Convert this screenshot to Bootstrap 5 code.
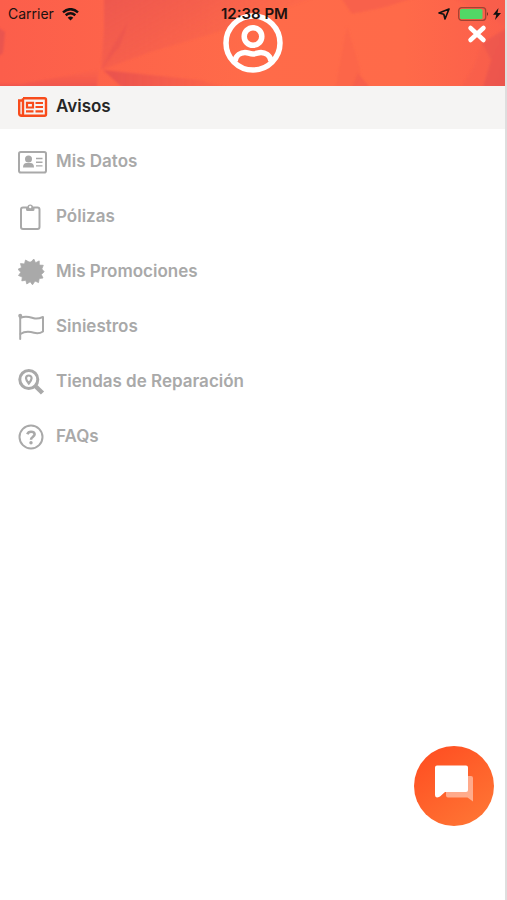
<!DOCTYPE html>
<html lang="es">
<head>
<meta charset="utf-8">
<meta name="viewport" content="width=device-width, initial-scale=1">
<title>Menú</title>
<link href="https://cdn.jsdelivr.net/npm/bootstrap@5.3.0/dist/css/bootstrap.min.css" rel="stylesheet">
<style>
body { font-family: Inter, "Liberation Sans", sans-serif; background: #fff; }
.app-shell { border-right: 2px solid #dedede; }
.app-header { background: #ff674a; height: 86px; color: #201210; }
.header-art { z-index: 0; }
.status-bar { z-index: 2; display: grid; grid-template-columns: 1fr auto 1fr; font-size: 14px; line-height: 28px; padding: 0 4px 0 8px; }
.status-time { font-size: 15px; font-weight: 600; }
.avatar-link { z-index: 1; top: 13px; left: 0; right: 0; width: 60px; margin: 0 auto; line-height: 0; }
.close-btn { z-index: 2; margin-right: 19px; line-height: 0; }
.menu-list { gap: 12px; }
.menu-link { height: 43px; padding: 0 18px; gap: 8px; color: #a9a9a9; font-size: 17px; line-height: 24px; font-weight: 600; text-decoration: none; }
.menu-link span { padding-bottom: 4px; }
.menu-link svg { width: 30px; height: 30px; flex: none; margin-bottom: 2px; }
.menu-link:hover { color: #777; }
.menu-link.current { background: #f5f4f3; color: #262626; }
.menu-link.current svg { color: #f84b1b; }
.chat-btn { width: 80px; height: 80px; right: 13px; bottom: 74px; background: linear-gradient(145deg, #ff4b20, #ff7936); }
</style>
</head>
<body>
<div class="app-shell min-vh-100">
  <header class="app-header position-relative overflow-hidden">
    <svg class="header-art position-absolute top-0 start-0 w-100 h-100" viewBox="0 0 505 86" preserveAspectRatio="none" aria-hidden="true">
      <defs>
        <linearGradient id="base" x1="0" y1="0" x2="1" y2="0"><stop offset="0" stop-color="#fc5e4b"/><stop offset=".5" stop-color="#ff6b49"/><stop offset=".8" stop-color="#ff6a49"/><stop offset="1" stop-color="#fb5f4b"/></linearGradient>
        <linearGradient id="shadeA" gradientUnits="userSpaceOnUse" x1="130" y1="-10" x2="185" y2="85"><stop offset="0" stop-color="#ef594e"/><stop offset="1" stop-color="#ef594e" stop-opacity="0"/></linearGradient>
        <linearGradient id="shadeB" x1="0" y1="0" x2="1" y2="0"><stop offset="0" stop-color="#e9524e"/><stop offset="1" stop-color="#f45b4c" stop-opacity=".2"/></linearGradient>
        <linearGradient id="shadeD" x1="0" y1="0" x2="0" y2="1"><stop offset="0" stop-color="#f45c4c" stop-opacity=".2"/><stop offset="1" stop-color="#ec534e"/></linearGradient>
        <linearGradient id="shadeE" x1="0" y1="0" x2="1" y2="1"><stop offset="0" stop-color="#f25b4d"/><stop offset="1" stop-color="#e9534f"/></linearGradient>
        <filter id="soft" x="-5%" y="-20%" width="110%" height="140%"><feGaussianBlur stdDeviation="1"/></filter>
      </defs>
      <path d="M0 0H505V86H0Z" fill="url(#base)"/>
      <g filter="url(#soft)">
        <path d="M-4 26L5 32L3 53L-4 58Z" fill="#e9544f"/>
        <path d="M104 -4H320L225 30L150 52L101 70L104 30Z" fill="url(#shadeA)"/>
        <path d="M101 69L113 46L128 22L120 46Z" fill="#e9544e" opacity=".6"/>
        <path d="M20 84L60 77L98 70L97 90H-4V84Z" fill="url(#shadeD)"/>
        <path d="M103 70L150 75L200 80L235 90H125Z" fill="url(#shadeB)"/>
        <path d="M340 -4H420L385 7L352 14Z" fill="#f35b4c" opacity=".6"/>
        <path d="M347 26L361 72L352 90H335Z" fill="#fa644a" opacity=".6"/>
        <path d="M358 73L372 90H351Z" fill="#f25a4b" opacity=".65"/>
        <path d="M450 -4H510V30L478 10Z" fill="#f65c4c" opacity=".55"/>
        <path d="M510 26L482 43L491 60L482 90H510Z" fill="url(#shadeE)"/>
        <path d="M482 43L491 60L482 90H460L475 65Z" fill="#f65d4c" opacity=".5"/>
      </g>
    </svg>
    <div class="status-bar position-relative">
      <div class="d-flex align-items-center gap-2">
        <span>Carrier</span>
        <svg width="17" height="13" viewBox="0 0 17 13" fill="none" stroke="#111" stroke-width="2.5" aria-hidden="true"><path d="M1 4.400Q8.500-2 16 4.400M3.700 7.300Q8.500 3.200 13.300 7.300"/><path d="M5.700 9.700Q8.500 7.300 11.300 9.700L8.500 12.600Z" fill="#111" stroke="none"/></svg>
      </div>
      <span class="status-time">12:38 PM</span>
      <div class="d-flex align-items-center justify-content-end">
        <svg width="12" height="12" viewBox="0 0 12 12" fill="none" stroke="#111" stroke-width="1.600" stroke-linejoin="round" aria-hidden="true"><path d="M11 1L1 5L5.800 6.200L7 11Z"/></svg>
        <svg class="ms-2" width="31" height="14" viewBox="0 0 31 14" aria-hidden="true"><rect x=".7" y=".7" width="27" height="12.600" rx="3" fill="none" stroke="#a14332" stroke-width="1.300"/><rect x="2" y="2" width="22.500" height="10" rx="1.500" fill="#52d866"/><path d="M29 5Q31 7 29 9Z" fill="#702c22"/></svg>
        <svg class="ms-1" width="8" height="12" viewBox="0 0 8 12" aria-hidden="true"><path d="M5.500 0L0 6.700H3.300L2 12L8 4.900H4.500Z" fill="#111"/></svg>
      </div>
    </div>
    <a href="#perfil" class="avatar-link position-absolute" aria-label="Perfil">
      <svg width="60" height="60" viewBox="0 0 60 60" fill="none" stroke="#fff" stroke-width="5.500" aria-hidden="true"><circle cx="30" cy="30" r="27"/><circle cx="30" cy="23.500" r="8.800"/><path d="M12 48C13 42 18 39.500 22 39.500C25 39.500 26.500 41 30 41C33.500 41 35 39.500 38 39.500C42 39.500 47 42 48 48"/></svg>
    </a>
    <div class="d-flex justify-content-end">
      <button type="button" class="close-btn btn p-0 border-0 position-relative" aria-label="Cerrar">
        <svg class="d-block" width="18" height="13" viewBox="0 0 18 13" overflow="visible" fill="none" stroke="#fff" stroke-width="4.500" stroke-linecap="round" aria-hidden="true"><path d="M2.500 0L15.500 12M15.500 0L2.500 12"/></svg>
      </button>
    </div>
  </header>
  <nav aria-label="Principal">
    <ul class="menu-list list-unstyled d-flex flex-column m-0">
      <li><a class="menu-link current d-flex align-items-center" href="#avisos" aria-current="page">
        <svg viewBox="0 0 30 30" fill="none" stroke="currentColor" stroke-width="2.400" aria-hidden="true"><path d="M5 6.200H26.500Q28 6.200 28 7.700V22.300Q28 23.800 26.500 23.800H3.500Q1.200 23.800 1.200 21.500V8.500H5M5 6.200V21.500Q5 23.600 3.200 23.800"/><path d="M9 10.800H15V15.500H9ZM17.500 11H25M17.500 15H25M8 19.300H15.500M17.500 19.300H25" stroke-width="2.200"/></svg>
        <span>Avisos</span></a></li>
      <li><a class="menu-link d-flex align-items-center" href="#datos">
        <svg viewBox="0 0 30 30" fill="currentColor" aria-hidden="true"><rect x="1" y="5" width="27" height="20.500" rx="1.800" fill="none" stroke="currentColor" stroke-width="2"/><circle cx="10.500" cy="12" r="3.500"/><path d="M5 20.500Q5 16 8.500 16H12.500Q16 16 16 20.500Z"/><path d="M18 11.500H24.500M18 15.200H24.500M18 18.900H24.500" stroke="currentColor" stroke-width="1.400"/></svg>
        <span>Mis Datos</span></a></li>
      <li><a class="menu-link d-flex align-items-center" href="#polizas">
        <svg viewBox="0 0 30 30" fill="none" stroke="currentColor" stroke-width="2" aria-hidden="true"><rect x="3" y="5.500" width="18.500" height="21.500" rx="2"/><path d="M8 5H9.500Q9.500 2.500 12.200 2.500T15 5H16.500V7.500Q16.500 9 15 9H9.500Q8 9 8 7.500Z" fill="currentColor" stroke="none"/><circle cx="12.200" cy="5" r="1.200" fill="#fff" stroke="none"/></svg>
        <span>Pólizas</span></a></li>
      <li><a class="menu-link d-flex align-items-center" href="#promociones">
        <svg viewBox="0 0 30 30" fill="currentColor" aria-hidden="true"><path d="M13 5L15.800 2L17.500 5.800L21.200 3.900L21.300 8.100L25.300 8.300L23.800 12L26.200 14.700L23.300 17.500L25 21L21.200 21.500L20.500 25.600L17 24L14.500 27.800L12.200 24.700L8.800 27L7.800 23.200L3.800 23.900L4.300 20L.5 18.500L2.800 15.300L0 12.300L3.500 10.600L2.500 6.600L6.500 7L7.500 3L11 5Z" stroke="currentColor" stroke-width=".8" stroke-linejoin="round"/></svg>
        <span>Mis Promociones</span></a></li>
      <li><a class="menu-link d-flex align-items-center" href="#siniestros">
        <svg viewBox="0 0 30 30" fill="none" stroke="currentColor" stroke-width="2" stroke-linecap="round" stroke-linejoin="round" aria-hidden="true"><path d="M2.200 4V27"/><circle cx="2.200" cy="3.800" r="1" fill="currentColor"/><path d="M2.500 5.800C9 3.200 13 5.800 17 6.500C20 7 22.500 6 25 5V19.500C22 21.500 19 21.600 16 20.800C11.500 19.500 7 19 2.500 22"/></svg>
        <span>Siniestros</span></a></li>
      <li><a class="menu-link d-flex align-items-center" href="#tiendas">
        <svg viewBox="0 0 30 30" fill="none" stroke="currentColor" aria-hidden="true"><circle cx="10.800" cy="12.500" r="9" stroke-width="3"/><path d="M17.300 19L24.500 26" stroke-width="4.500"/><path d="M10.800 16.500Q8 13.200 8 11.300A2.800 2.800 0 0 1 13.600 11.300Q13.600 13.200 10.800 16.500Z" stroke-width="2.200"/></svg>
        <span>Tiendas de Reparación</span></a></li>
      <li><a class="menu-link d-flex align-items-center" href="#faqs">
        <svg viewBox="0 0 30 30" fill="none" stroke="currentColor" aria-hidden="true"><circle cx="13" cy="15" r="11.500" stroke-width="2"/><path d="M9.300 12.200Q10.200 9.700 13 9.700Q16.600 9.700 16.600 12.300Q16.600 14 14.700 15Q13 16 13 17.700" stroke-width="2.600"/><circle cx="13" cy="20.700" r="1.700" fill="currentColor" stroke="none"/></svg>
        <span>FAQs</span></a></li>
    </ul>
  </nav>
  <button type="button" class="chat-btn btn rounded-circle border-0 p-0 position-fixed d-flex align-items-center justify-content-center" aria-label="Chat">
    <svg width="80" height="80" viewBox="0 0 80 80" aria-hidden="true"><path d="M32 30H57Q59 30 59 32V55.500L53.500 51.500H34Q32 51.500 32 49.500Z" fill="#fff" opacity=".45"/><path d="M23 19.500H52Q54 19.500 54 21.500V44Q54 46 52 46H31L26 50.500Q21 53 21 49V21.500Q21 19.500 23 19.500Z" fill="#fff"/></svg>
  </button>
</div>
<script src="https://cdn.jsdelivr.net/npm/bootstrap@5.3.0/dist/js/bootstrap.bundle.min.js"></script>
</body>
</html>
